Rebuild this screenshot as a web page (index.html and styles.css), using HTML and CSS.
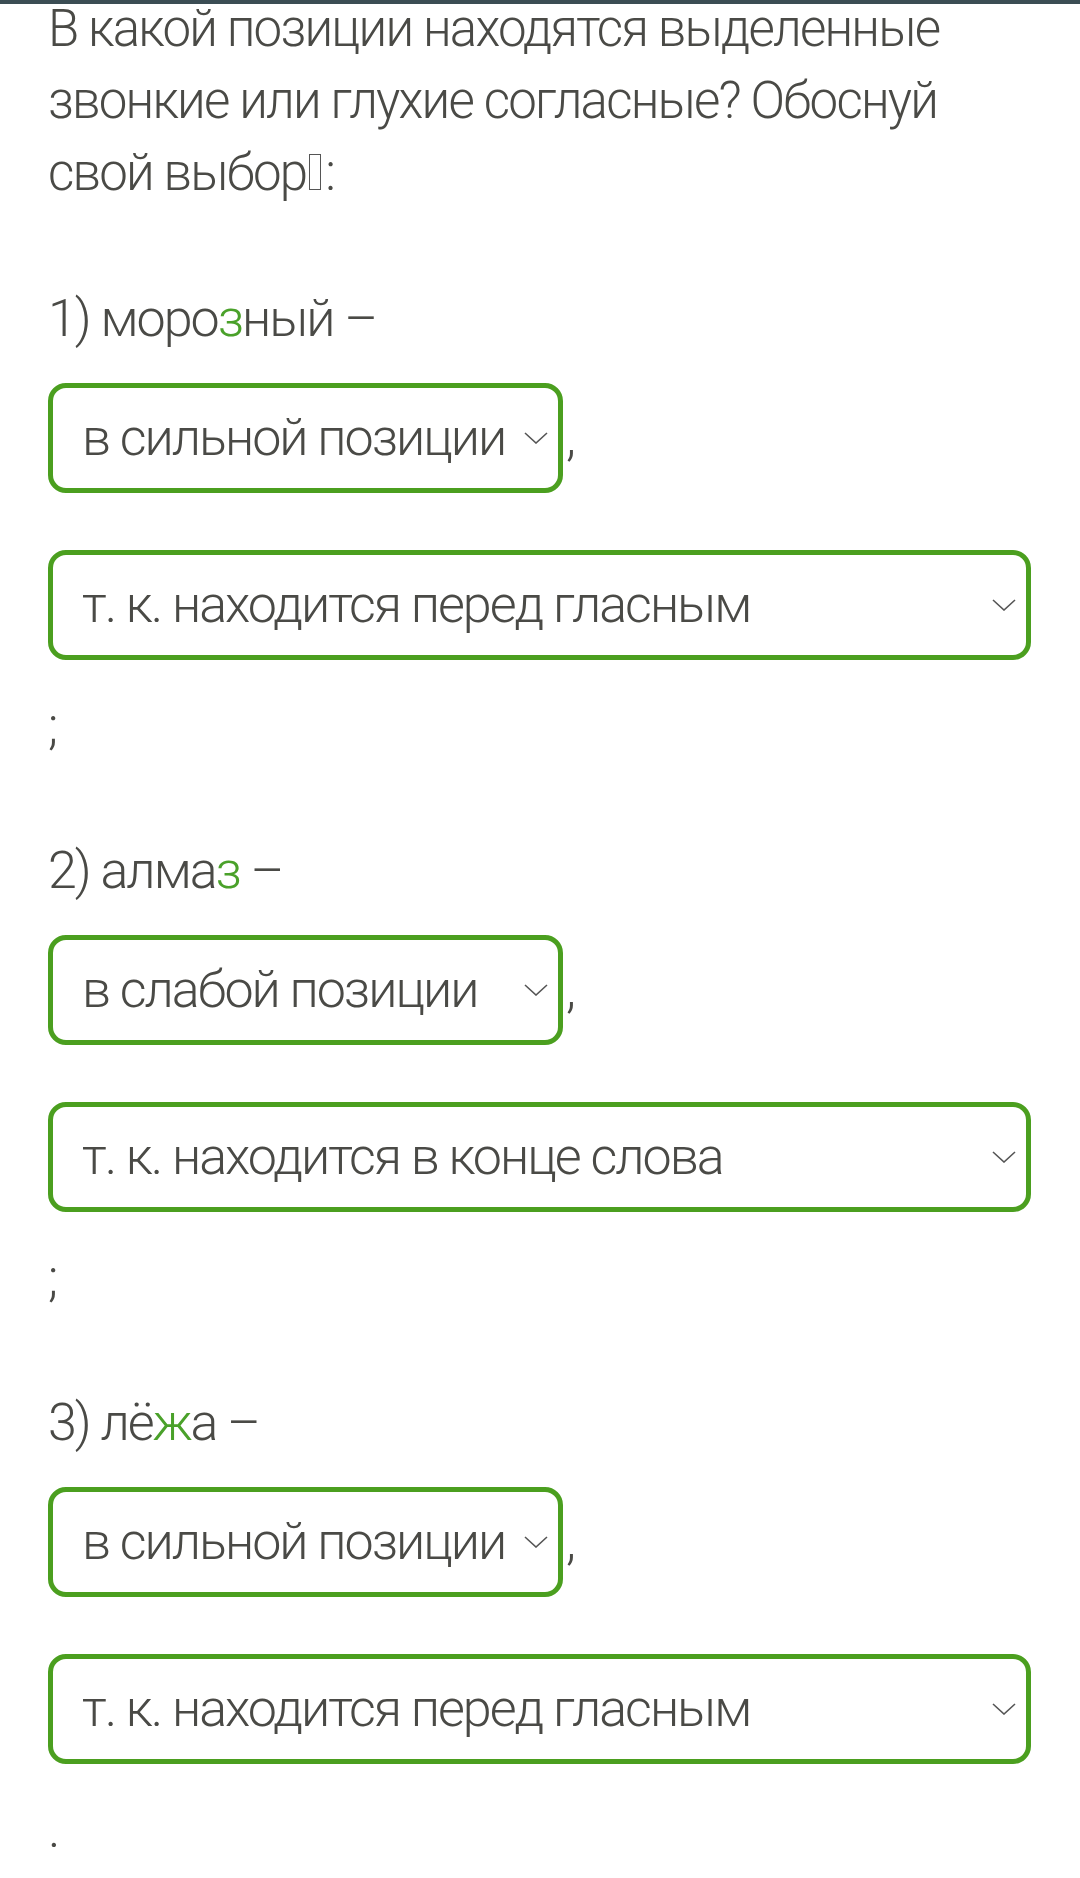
FILE: index.html
```html
<!DOCTYPE html>
<html lang="ru">
<head>
  <meta charset="UTF-8">
  <title>Позиция согласных</title>
  <link rel="stylesheet" href="styles.css">
</head>
<body>

  <div class="topbar"></div>

  <div class="content">
    <p class="question">В какой позиции находятся выделенные звонкие или глухие согласные? Обоснуй свой выбор<span class="tofu"></span>:</p>

    <div class="item">
      <p class="word">1) моро<span class="hl">з</span>ный –</p>
      <div class="row">
        <div class="select short"><span>в сильной позиции</span>
          <svg class="chev" viewBox="0 0 24 12"><path d="M1 1 L12 11 L23 1"/></svg>
        </div><span class="after">,</span>
      </div>
      <div class="select long"><span>т. к. находится перед гласным</span>
        <svg class="chev" viewBox="0 0 24 12"><path d="M1 1 L12 11 L23 1"/></svg>
      </div>
      <p class="end">;</p>
    </div>

    <div class="item">
      <p class="word">2) алма<span class="hl">з</span> –</p>
      <div class="row">
        <div class="select short"><span>в слабой позиции</span>
          <svg class="chev" viewBox="0 0 24 12"><path d="M1 1 L12 11 L23 1"/></svg>
        </div><span class="after">,</span>
      </div>
      <div class="select long"><span>т. к. находится в конце слова</span>
        <svg class="chev" viewBox="0 0 24 12"><path d="M1 1 L12 11 L23 1"/></svg>
      </div>
      <p class="end">;</p>
    </div>

    <div class="item">
      <p class="word">3) лё<span class="hl">ж</span>а –</p>
      <div class="row">
        <div class="select short"><span>в сильной позиции</span>
          <svg class="chev" viewBox="0 0 24 12"><path d="M1 1 L12 11 L23 1"/></svg>
        </div><span class="after">,</span>
      </div>
      <div class="select long"><span>т. к. находится перед гласным</span>
        <svg class="chev" viewBox="0 0 24 12"><path d="M1 1 L12 11 L23 1"/></svg>
      </div>
      <p class="end">.</p>
    </div>
  </div>

</body>
</html>
```

FILE: styles.css
```css
body {
  margin: 0;
  background-color: #fff;
  font-family: Roboto, "Noto Sans", sans-serif;
  font-weight: 300;
  font-size: 52px;
  color: #4a4a46;
  letter-spacing: -2px;
}
.topbar {
  height: 4px;
  background-color: #3b4d54;
}
.content {
  padding: 0 49px 0 48px;
}
p {
  margin: 0;
  line-height: 72px;
}
.question {
  margin-top: -11px;
  font-size: 51px;
  letter-spacing: -1.8px;
}
.tofu {
  display: inline-block;
  width: 10px;
  height: 34px;
  border: 1.5px solid #555;
  margin: 0 4px 0 3px;
  vertical-align: baseline;
}
.item {
  margin-top: 74px;
}
.item + .item {
  margin-top: 73px;
}
.hl {
  color: #4aa12a;
}
.row {
  display: flex;
  align-items: baseline;
  margin-top: 28px;
}
.after {
  margin-left: 3px;
}
.select {
  box-sizing: border-box;
  height: 110px;
  border: 5px solid #4b9f1f;
  border-radius: 18px;
  padding: 0 10px 0 29px;
  display: flex;
  align-items: center;
  justify-content: space-between;
  line-height: 60px;
}
.select.short {
  width: 515px;
}
.select.long {
  width: 983px;
  margin-top: 57px;
}
.chev {
  width: 24px;
  height: 12px;
  fill: none;
  stroke: #555;
  stroke-width: 1.6;
  flex: none;
}
.end {
  margin-top: 30px;
}
```
